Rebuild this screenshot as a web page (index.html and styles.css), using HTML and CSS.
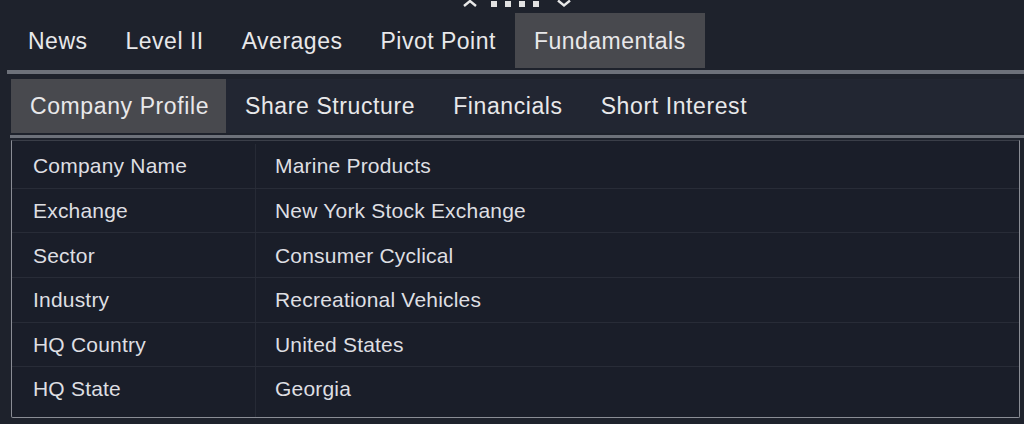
FILE: index.html
```html
<!DOCTYPE html>
<html lang="en">

<head>
    <meta charset="UTF-8">
    <meta name="viewport" content="width=device-width, initial-scale=1.0">
    <title>Fundamentals</title>
    <link rel="stylesheet" href="styles.css">
</head>

<body>
    <div class="grip">
        <svg class="chev" width="16" height="9" viewBox="0 0 16 9">
            <path d="M2 7 L8 2 L14 7" fill="none" stroke="#e8e8e8" stroke-width="2.4" />
        </svg>
        <span class="dot"></span>
        <span class="dot"></span>
        <span class="dot"></span>
        <span class="dot"></span>
        <svg class="chev" width="16" height="9" viewBox="0 0 16 9">
            <path d="M2 1.5 L8 6.5 L14 1.5" fill="none" stroke="#e8e8e8" stroke-width="2.4" />
        </svg>
    </div>

    <div class="tabs">
        <div class="tab">News</div>
        <div class="tab">Level II</div>
        <div class="tab">Averages</div>
        <div class="tab">Pivot Point</div>
        <div class="tab active">Fundamentals</div>
    </div>
    <div class="rule"></div>

    <div class="panel">
        <div class="subtabs">
            <div class="tab active">Company Profile</div>
            <div class="tab">Share Structure</div>
            <div class="tab">Financials</div>
            <div class="tab">Short Interest</div>
        </div>
        <div class="rule sub"></div>

        <div class="profile">
            <div class="row">
                <div class="key">Company Name</div>
                <div class="val">Marine Products</div>
            </div>
            <div class="row">
                <div class="key">Exchange</div>
                <div class="val">New York Stock Exchange</div>
            </div>
            <div class="row">
                <div class="key">Sector</div>
                <div class="val">Consumer Cyclical</div>
            </div>
            <div class="row">
                <div class="key">Industry</div>
                <div class="val">Recreational Vehicles</div>
            </div>
            <div class="row">
                <div class="key">HQ Country</div>
                <div class="val">United States</div>
            </div>
            <div class="row">
                <div class="key">HQ State</div>
                <div class="val">Georgia</div>
            </div>
        </div>
    </div>
</body>

</html>
```

FILE: styles.css
```css
:root {
    --bg: #1e222c;
    --bar: #222632;
    --active: #48494e;
    --rule: #6d717a;
    --text: #e8e8ea;
}

body {
    margin: 0;
    height: 424px;
    overflow: hidden;
    background: var(--bg);
    font-family: 'Liberation Sans', Arial, sans-serif;
    color: var(--text);
}

/* drag handle on top */
.grip {
    height: 13px;
    display: flex;
    justify-content: center;
    align-items: flex-start;
    gap: 8px;
    padding-left: 10px;
}

.grip .chev {
    margin-top: -1px;
}

.grip .chev:first-child {
    margin-right: 5px;
}

.grip .chev:last-child {
    margin-left: 9px;
}

.dot {
    width: 6px;
    height: 6px;
    margin-top: 1px;
    background: #e2e2e2;
}

.tabs,
.subtabs {
    display: flex;
    height: 55px;
}

.tabs {
    padding-left: 9px;
}

.tab {
    display: flex;
    align-items: center;
    padding: 1px 19px 0 19px;
    font-size: 23px;
    letter-spacing: 0.6px;
    white-space: nowrap;
}

.tabs .tab {
    letter-spacing: 0.5px;
}

.tab.active {
    background: var(--active);
}

.rule {
    height: 4px;
    margin: 2px 0 0 7px;
    background: var(--rule);
}

.panel {
    margin: 5px 0 0 11px;
}

.subtabs {
    height: 54px;
    background: var(--bar);
}

.subtabs .tab.active {
    padding-right: 17px;
}

.rule.sub {
    height: 3px;
    margin: 2px 0 0 -1px;
}

.profile {
    margin: 2px 4px 0 0;
    height: 278px;
    padding-top: 3px;
    box-sizing: border-box;
    background: #1a1e29;
    border: 1px solid #8a8d95;
    border-top-color: #3a3e48;
    border-radius: 0 0 2px 2px;
}

.row {
    display: flex;
    height: 43.7px;
    border-bottom: 1px solid #282c37;
    font-size: 21px;
    letter-spacing: 0.2px;
    color: #dedfe2;
}

.row:last-child {
    border-bottom: none;
    height: 50px;
}

.key {
    width: 222px;
    padding: 1px 0 0 21px;
    display: flex;
    align-items: center;
    border-right: 1px solid #262a35;
}

.val {
    padding: 1px 0 0 19px;
    display: flex;
    align-items: center;
}

.row:last-child .key,
.row:last-child .val {
    padding-top: 0;
    padding-bottom: 6px;
}
```
